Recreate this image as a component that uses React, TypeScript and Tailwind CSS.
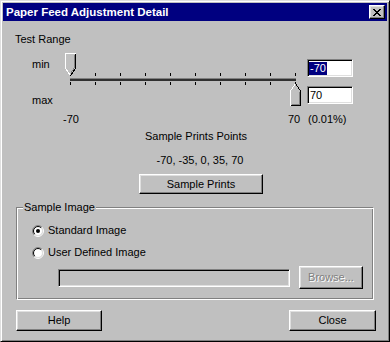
const BTN =
  'flex items-center justify-center bg-[#c0c0c0] border border-t-white border-l-white border-r-black border-b-black shadow-[inset_-1px_-1px_0_#808080,inset_1px_1px_0_#dfdfdf]'
const FIELD =
  'border border-t-[#808080] border-l-[#808080] border-r-white border-b-white shadow-[inset_1px_1px_0_#000,inset_-1px_-1px_0_#dfdfdf]'

function Slider() {
  const ticks = Array.from({ length: 10 }, (_, i) => 10.5 + i * 25)
  return (
    <svg width="247" height="58" shapeRendering="crispEdges" className="shrink-0">
      <rect x="10" y="26" width="226" height="1" fill="#808080" />
      <rect x="10" y="27" width="226" height="2" fill="#303030" />
      {ticks.map(x => (
        <g key={x}>
          <line x1={x} y1="21" x2={x} y2="24" stroke="#000" />
          <line x1={x} y1="30" x2={x} y2="33" stroke="#000" />
        </g>
      ))}
      {/* min thumb, points down */}
      <polygon points="5,1 16,1 16,16 10.5,24 5,16" fill="#c0c0c0" />
      <polyline points="10.5,24 5.5,16 5.5,1.5 15.5,1.5" fill="none" stroke="#fff" />
      <polyline points="15.5,1.5 15.5,16 10.5,24" fill="none" stroke="#000" />
      <polyline points="14.5,3 14.5,15.5 10.5,21.5" fill="none" stroke="#808080" />
      {/* max thumb, points up */}
      <polygon points="235.5,31 241,39 241,54 230,54 230,39" fill="#c0c0c0" />
      <polyline points="230.5,53.5 230.5,39 235.5,31.5" fill="none" stroke="#fff" />
      <polyline points="235.5,31.5 240.5,39 240.5,53.5 230.5,53.5" fill="none" stroke="#000" />
      <polyline points="239.5,40 239.5,52.5 231.5,52.5" fill="none" stroke="#808080" />
    </svg>
  )
}

function Radio({ checked }: { checked?: boolean }) {
  const a = 6 - 5.5 * 0.7071
  const b = 6 + 5.5 * 0.7071
  const c = 6 - 4.5 * 0.7071
  const d = 6 + 4.5 * 0.7071
  return (
    <svg width="12" height="12" className="shrink-0">
      <circle cx="6" cy="6" r="4.5" fill="#fff" />
      <path d={`M${a} ${b} A5.5 5.5 0 0 1 ${b} ${a}`} fill="none" stroke="#808080" />
      <path d={`M${b} ${a} A5.5 5.5 0 0 1 ${a} ${b}`} fill="none" stroke="#fff" />
      <path d={`M${c} ${d} A4.5 4.5 0 0 1 ${d} ${c}`} fill="none" stroke="#000" />
      <path d={`M${d} ${c} A4.5 4.5 0 0 1 ${c} ${d}`} fill="none" stroke="#dfdfdf" />
      {checked && <circle cx="6" cy="6" r="2" fill="#000" />}
    </svg>
  )
}

export default function App() {
  return (
    <div className="w-[390px] h-[342px] bg-[#c0c0c0] border border-t-[#dfdfdf] border-l-[#dfdfdf] border-r-black border-b-black shadow-[inset_1px_1px_0_#fff,inset_-1px_-1px_0_#808080] p-[2px] font-['Liberation_Sans',Arial,sans-serif] text-[11px] leading-[13px] text-black overflow-hidden">
      <div className="h-[18px] bg-[#000080] flex items-center justify-between pl-[3px] pr-[2px]">
        <span className="text-white font-bold text-[11.5px]">Paper Feed Adjustment Detail</span>
        <div className={`${BTN} w-[16px] h-[14px]`}>
          <svg width="8" height="7" shapeRendering="crispEdges">
            <path d="M0 0h2v1h-2zM1 1h2v1h-2zM2 2h4v1h-4zM3 3h2v1h-2zM2 4h4v1h-4zM1 5h2v1h-2zM0 6h2v1h-2zM6 0h2v1h-2zM5 1h2v1h-2zM5 5h2v1h-2zM6 6h2v1h-2z" fill="#000" />
          </svg>
        </div>
      </div>

      <div className="mt-[12px] ml-[12px]">Test Range</div>

      <div className="mt-[6px] ml-[29px] flex">
        <div className="w-[28px] flex flex-col pt-[6px]">
          <span>min</span>
          <span className="mt-[23px]">max</span>
        </div>
        <Slider />
        <div className="w-[46px] flex flex-col">
          <div className={`${FIELD} bg-white mt-[7px] h-[18px] flex items-center pl-[1px]`}>
            <span className="bg-[#000080] text-white px-[1px]">-70</span>
          </div>
          <div className={`${FIELD} bg-white mt-[9px] h-[18px] flex items-center pl-[2px]`}>70</div>
        </div>
      </div>

      <div className="mt-[3px] ml-[60px] flex">
        <span className="w-[225px]">-70</span>
        <span className="w-[20px]">70</span>
        <span>(0.01%)</span>
      </div>

      <div className="mt-[4px] text-center pl-[2px]">Sample Prints Points</div>
      <div className="mt-[11px] text-center pl-[10px]">-70, -35, 0, 35, 70</div>
      <div className={`${BTN} mt-[7px] ml-[136px] w-[124px] h-[20px]`}>Sample Prints</div>

      <div className="relative mt-[13px] ml-[13px] w-[358px] h-[93px] border border-t-[#808080] border-l-[#808080] border-r-white border-b-white shadow-[inset_1px_1px_0_#fff,inset_-1px_-1px_0_#808080]">
        <span className="absolute left-[6px] -top-[7px] px-[1px] bg-[#c0c0c0]">Sample Image</span>
        <div className="mt-[16px] ml-[15px] h-[13px] flex items-center gap-[4px]">
          <Radio checked />
          <span>Standard Image</span>
        </div>
        <div className="mt-[9px] ml-[15px] h-[13px] flex items-center gap-[4px]">
          <Radio />
          <span>User Defined Image</span>
        </div>
        <div className="mt-[7px] ml-[41px] flex items-center">
          <div className={`${FIELD} bg-[#c0c0c0] w-[232px] h-[18px]`} />
          <div className={`${BTN} ml-[9px] w-[64px] h-[23px] text-[#808080] [text-shadow:1px_1px_0_#fff]`}>Browse...</div>
        </div>
      </div>

      <div className="mt-[10px] ml-[13px] mr-[11px] flex justify-between">
        <div className={`${BTN} w-[86px] h-[21px]`}>Help</div>
        <div className={`${BTN} w-[87px] h-[21px]`}>Close</div>
      </div>
    </div>
  )
}
